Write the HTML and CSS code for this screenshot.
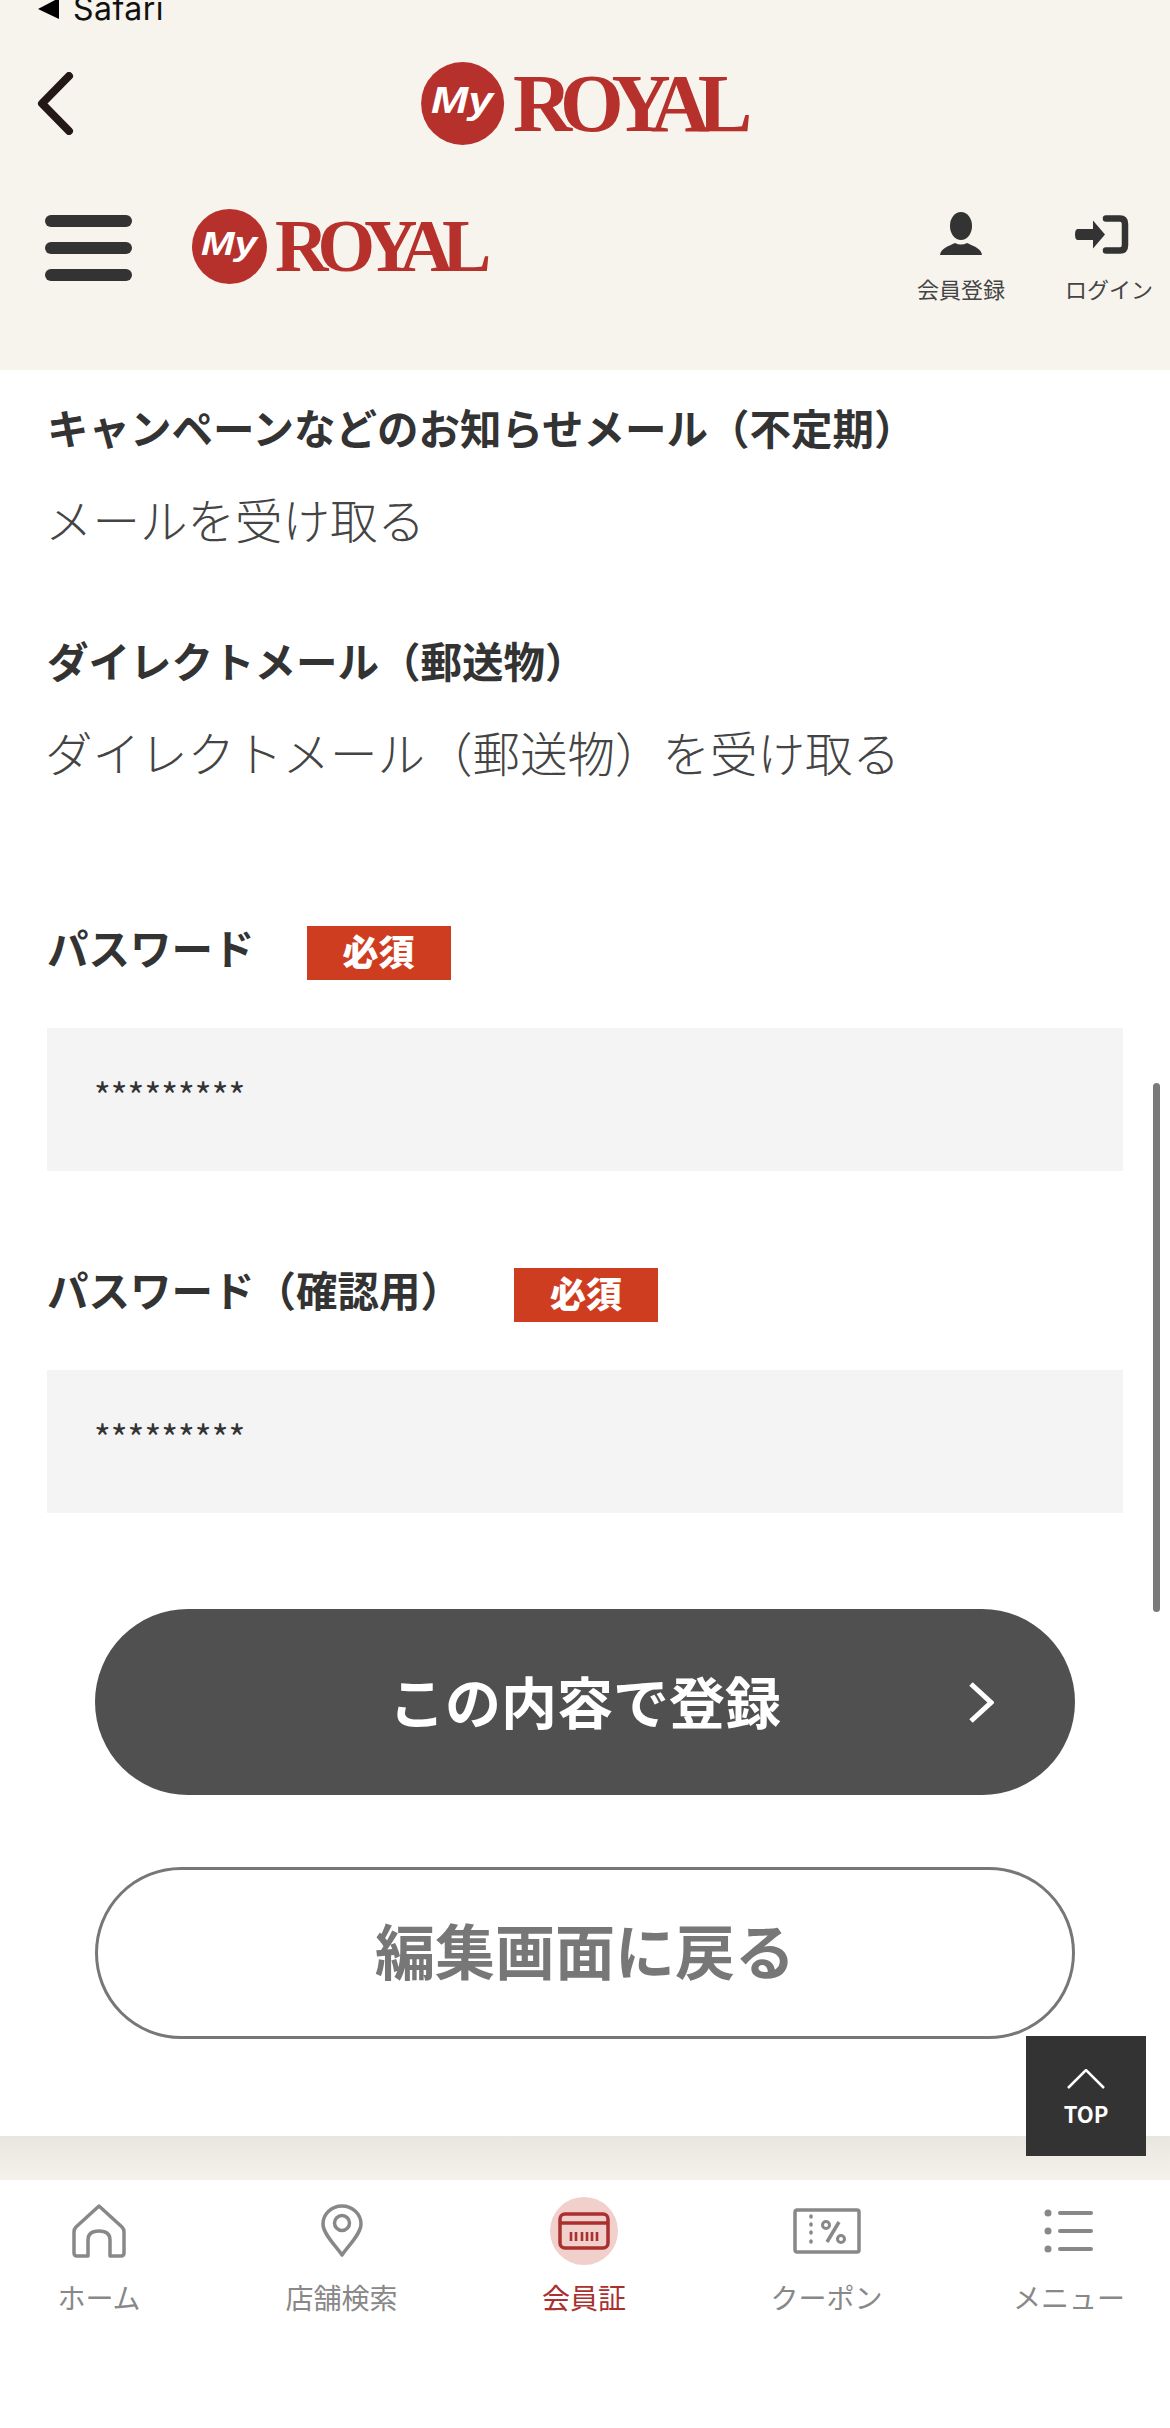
FILE: index.html

```html
<!DOCTYPE html>
<html lang="ja">
<head>
  <meta charset="UTF-8">
  <title>MyROYAL 会員情報確認</title>
  <link rel="stylesheet" href="styles.css">
</head>
<body>

<div class="page">

  <!-- Header -->
  <header class="header">
    <div class="crumb">
      <svg class="crumb-arrow" width="21" height="19" viewBox="0 0 21 19"><polygon points="0,9 21,-2 21,19" fill="#000"/></svg>
      <span>Safari</span>
    </div>
    <div class="app-bar">
      <svg class="back" width="37" height="63" viewBox="0 0 37 63"><polyline points="32,4 5,31.500 32,59" fill="none" stroke="#231815" stroke-width="8" stroke-linecap="round" stroke-linejoin="round"/></svg>
      <svg class="logo logo-large" viewBox="0 0 298 75">
        <ellipse cx="37.500" cy="37.500" rx="37.500" ry="37.500" fill="#b7312c"/>
        <text x="9" y="46" class="logo-my" textLength="56" lengthAdjust="spacingAndGlyphs">My</text>
        <text x="83" y="62" class="logo-royal">ROYAL</text>
      </svg>
    </div>
    <div class="site-bar">
      <div class="burger"><span></span><span></span><span></span></div>
      <svg class="logo logo-small" viewBox="0 0 298 75">
        <ellipse cx="37.500" cy="37.500" rx="37.500" ry="37.500" fill="#b7312c"/>
        <text x="9" y="46" class="logo-my" textLength="56" lengthAdjust="spacingAndGlyphs">My</text>
        <text x="83" y="62" class="logo-royal">ROYAL</text>
      </svg>
      <div class="site-links">
        <a class="site-link">
          <svg width="44" height="44" viewBox="0 0 44 44" fill="#333">
            <ellipse cx="22" cy="14" rx="11" ry="14"/>
            <path d="M1 43 C2 36 10 34 16 31 Q22 34 28 31 C34 34 42 36 43 43 Z"/>
          </svg>
          <span>会員登録</span>
        </a>
        <a class="site-link">
          <svg class="login-icon" width="54" height="44" viewBox="0 0 54 44">
            <path d="M31 6.500 H45 Q50 6.500 50 12 V33 Q50 38.500 45 38.500 H31" fill="none" stroke="#333" stroke-width="6.500" stroke-linecap="round"/>
            <path d="M3 17 H18 V8.500 L30 22.500 L18 36.500 V28 H3 Q0 28 0 22.500 Q0 17 3 17 Z" fill="#333"/>
          </svg>
          <span>ログイン</span>
        </a>
      </div>
    </div>
  </header>

  <!-- Form -->
  <main class="content">
    <h3 class="opt-title">キャンペーンなどのお知らせメール（不定期）</h3>
    <p class="opt-value">メールを受け取る</p>
    <h3 class="opt-title opt-next">ダイレクトメール（郵送物）</h3>
    <p class="opt-value">ダイレクトメール（郵送物）を受け取る</p>

    <div class="field-label first">
      <span class="label-text">パスワード</span>
      <span class="required">必須</span>
    </div>
    <div class="field">*********</div>

    <div class="field-label">
      <span class="label-text">パスワード（確認用）</span>
      <span class="required">必須</span>
    </div>
    <div class="field">*********</div>

    <div class="btn btn-submit">
      この内容で登録
      <svg class="btn-arrow" width="26" height="41" viewBox="0 0 26 41"><polyline points="3,2 23,20.500 3,39" fill="none" stroke="#fff" stroke-width="5"/></svg>
    </div>
    <div class="btn btn-back">編集画面に戻る</div>
  </main>

  <!-- Bottom nav -->
  <div class="nav-shadow"></div>
  <nav class="tabbar">
    <a class="tab">
      <span class="tab-icon">
        <svg width="54" height="54" viewBox="0 0 54 54" fill="none" stroke="#888" stroke-width="3.500" stroke-linejoin="round">
          <path d="M27 2 L50 23 Q52 25 52 28 V49 Q52 52 49 52 H38 V36 Q38 27 27 27 Q16 27 16 36 V52 H5 Q2 52 2 49 V28 Q2 25 4 23 Z"/>
        </svg>
      </span>
      <span class="tab-label">ホーム</span>
    </a>
    <a class="tab">
      <span class="tab-icon">
        <svg width="42" height="54" viewBox="0 0 42 54" fill="none" stroke="#888" stroke-width="3.500">
          <path d="M21 51 C15 42 2 30 2 20 A19 18 0 0 1 40 20 C40 30 27 42 21 51 Z" stroke-linejoin="round"/>
          <circle cx="21" cy="19" r="7.500"/>
        </svg>
      </span>
      <span class="tab-label">店舗検索</span>
    </a>
    <a class="tab tab-active">
      <span class="tab-icon">
        <svg width="52" height="38" viewBox="0 0 52 38" fill="none" stroke="#a9302f" stroke-width="3.500">
          <rect x="2" y="2" width="48" height="34" rx="5"/>
          <line x1="2" y1="11" x2="50" y2="11"/>
          <path d="M13 20 v9 M18 20 v9 M24 20 v9 M29 20 v9 M34 20 v9 M39 20 v9" stroke-width="2.600"/>
        </svg>
      </span>
      <span class="tab-label">会員証</span>
    </a>
    <a class="tab">
      <span class="tab-icon">
        <svg width="68" height="46" viewBox="0 0 68 46" fill="none" stroke="#888" stroke-width="3.500">
          <rect x="2" y="2" width="64" height="42" rx="2"/>
          <path d="M18 8 v1 M18 16 v1 M18 24 v1 M18 33 v1" stroke-width="3.500" stroke-linecap="round"/>
          <line x1="46" y1="14" x2="34" y2="34"/>
          <circle cx="33" cy="17" r="3.500" stroke-width="3"/>
          <circle cx="48" cy="31" r="3.500" stroke-width="3"/>
        </svg>
      </span>
      <span class="tab-label">クーポン</span>
    </a>
    <a class="tab">
      <span class="tab-icon">
        <svg width="50" height="44" viewBox="0 0 50 44" fill="#888">
          <circle cx="4" cy="4" r="3.500"/><circle cx="4" cy="22" r="3.500"/><circle cx="4" cy="40" r="3.500"/>
          <rect x="14" y="2" width="35" height="4" rx="2"/><rect x="14" y="20" width="35" height="4" rx="2"/><rect x="14" y="38" width="35" height="4" rx="2"/>
        </svg>
      </span>
      <span class="tab-label">メニュー</span>
    </a>
  </nav>

  <!-- Floating -->
  <div class="page-top">
    <svg width="38" height="20" viewBox="0 0 38 20"><polyline points="1,19 19,1 37,19" fill="none" stroke="#fff" stroke-width="2.500"/></svg>
    <span>TOP</span>
  </div>
  <div class="scrollbar"></div>

</div>

</body>
</html>
```

FILE: styles.css

```css
html, body {
  margin: 0;
  padding: 0;
  background: #fff;
  font-family: "Noto Sans CJK JP", "Noto Sans", sans-serif;
}

.page {
  position: relative;
  width: 1170px;
  height: 2428px;
  overflow: hidden;
  display: flex;
  flex-direction: column;
}

/* Header */
.header {
  height: 370px;
  background: #f7f3ed;
}

.crumb {
  height: 24px;
  padding-left: 38px;
  display: flex;
  align-items: flex-start;
  font-family: Inter, sans-serif;
  font-size: 32px;
  line-height: 18px;
  letter-spacing: 0.5px;
  color: #111;
}

.crumb-arrow {
  margin-right: 14px;
}

.app-bar {
  margin-top: 38px;
  height: 83px;
  padding-left: 37px;
  position: relative;
  display: flex;
  align-items: center;
  justify-content: center;
}

.back {
  position: absolute;
  left: 37px;
  top: 10px;
}

.logo {
  display: block;
  overflow: visible;
}

.logo-large {
  width: 330px;
  height: 83px;
  margin-left: -35px;
}

.logo-small {
  width: 298px;
  height: 75px;
  margin-left: 60px;
}

.logo-my {
  font-family: "Liberation Sans", sans-serif;
  font-style: italic;
  font-weight: 700;
  font-size: 33px;
  fill: #fff;
}

.logo-royal {
  font-family: "Liberation Serif", serif;
  font-size: 74px;
  font-weight: 700;
  letter-spacing: -11px;
  fill: #b7312c;
}

.site-bar {
  margin-top: 64px;
  padding-left: 45px;
  display: flex;
  align-items: flex-start;
}

.burger {
  width: 87px;
  margin-top: 6px;
  display: flex;
  flex-direction: column;
  gap: 15px;
}

.burger span {
  display: block;
  height: 12px;
  border-radius: 6px;
  background: #333;
}

.site-links {
  margin-left: auto;
  margin-top: 3px;
  padding-right: 17px;
  display: flex;
  gap: 60px;
}

.site-link {
  width: 88px;
  display: flex;
  flex-direction: column;
  align-items: center;
  gap: 17px;
  font-size: 22px;
  line-height: 30px;
  color: #444;
}

.login-icon {
  margin-left: -14px;
}

/* Form */
.content {
  height: 1766px;
  padding: 27px 47px 0;
  box-sizing: border-box;
  color: #333;
}

.opt-title {
  margin: 0;
  font-size: 41.500px;
  line-height: 60px;
  font-weight: 700;
}

.opt-next {
  margin-top: 81px;
}

.opt-value {
  margin: 32px 0 0 -2px;
  font-size: 47.500px;
  line-height: 60px;
  font-weight: 300;
  color: #444;
}

.field-label {
  height: 54px;
  margin-top: 97px;
  display: flex;
  align-items: center;
  gap: 52px;
}

.field-label.first {
  margin-top: 144px;
}

.label-text {
  font-size: 41.500px;
  line-height: 60px;
  margin-top: -12px;
}

.label-text,
.required {
  font-weight: 700;
}

.required {
  width: 144px;
  height: 54px;
  background: #cf3d20;
  color: #fff;
  font-size: 36px;
  font-weight: 900;
  line-height: 49px;
  text-align: center;
}

.field {
  height: 143px;
  margin-top: 48px;
  padding: 36px 47px 0;
  box-sizing: border-box;
  background: #f4f4f4;
  font-size: 36px;
  line-height: 60px;
  color: #333;
}

.btn {
  position: relative;
  margin: 0 48px;
  box-sizing: border-box;
  border-radius: 100px;
  display: flex;
  align-items: center;
  justify-content: center;
  font-weight: 700;
}

.btn-submit {
  height: 186px;
  margin-top: 96px;
  padding-bottom: 6px;
  background: #505050;
  color: #fff;
  font-size: 56px;
}

.btn-arrow {
  position: absolute;
  right: 81px;
  top: 73px;
}

.btn-back {
  height: 172px;
  margin-top: 72px;
  padding-bottom: 9px;
  background: #fff;
  border: 3px solid #777;
  color: #777;
  font-size: 60px;
}

/* Bottom nav */
.nav-shadow {
  height: 44px;
  background: linear-gradient(#e9e6df, #f5f2ec);
}

.tabbar {
  height: 248px;
  padding: 17px 2px 0 0;
  box-sizing: border-box;
  background: #fff;
  display: flex;
  justify-content: space-between;
}

.tab {
  width: 198px;
  display: flex;
  flex-direction: column;
  align-items: center;
  color: #888;
}

.tab-icon {
  width: 68px;
  height: 68px;
  border-radius: 50%;
  display: flex;
  align-items: center;
  justify-content: center;
}

.tab-label {
  margin-top: 12px;
  font-size: 28px;
  line-height: 40px;
}

.tab-active {
  color: #a9302f;
}

.tab-active .tab-icon {
  background: #f1cfca;
}

/* Floating */
.page-top {
  position: absolute;
  left: 1026px;
  top: 2036px;
  width: 120px;
  height: 120px;
  padding-top: 33px;
  box-sizing: border-box;
  background: #333;
  color: #fff;
  display: flex;
  flex-direction: column;
  align-items: center;
  gap: 9px;
  font-size: 22px;
  line-height: 30px;
  font-weight: 700;
}

.scrollbar {
  position: absolute;
  left: 1153px;
  top: 1083px;
  width: 7px;
  height: 529px;
  border-radius: 4px;
  background: #7a7a7a;
}
```
